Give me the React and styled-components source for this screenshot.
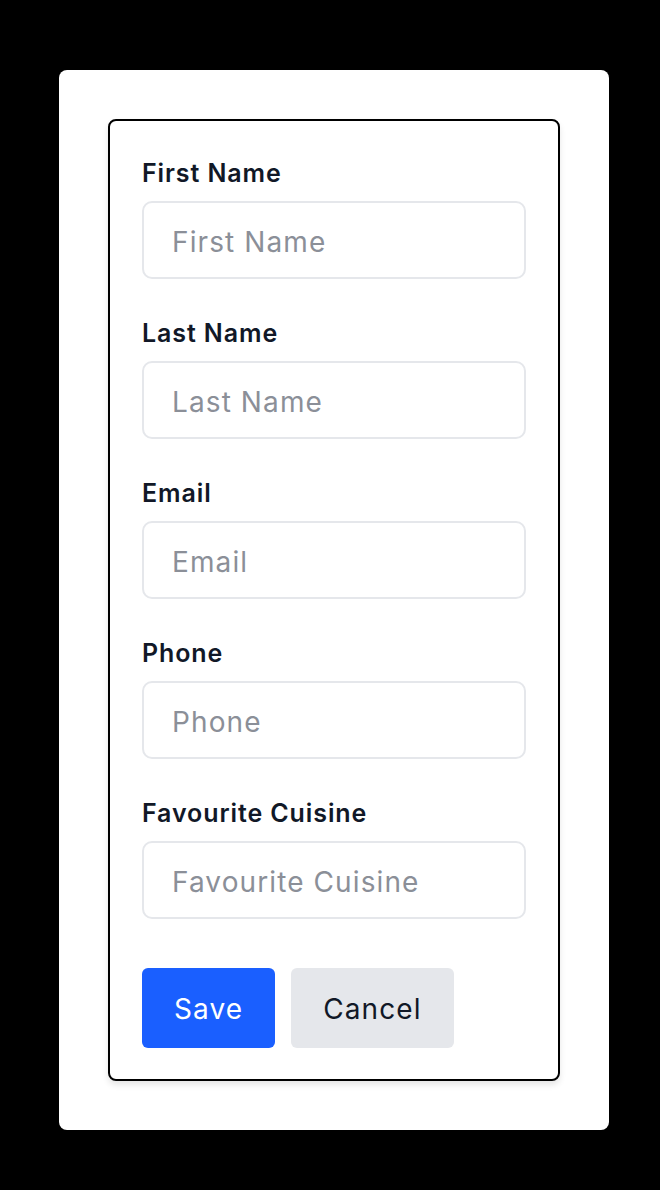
import React from 'react';
import styled, { createGlobalStyle } from 'styled-components';

const GlobalStyle = createGlobalStyle`
  html, body {
    margin: 0;
    padding: 0;
    background: #000000;
  }
  body {
    font-family: Inter, "Noto Sans", "Liberation Sans", sans-serif;
  }
  * {
    box-sizing: border-box;
  }
`;

const Page = styled.div`
  width: 660px;
  height: 1190px;
  padding: 70px 0 0 59px;
  background: #000000;
`;

const Card = styled.div`
  width: 550px;
  height: 1060px;
  padding: 49px;
  background: #ffffff;
  border-radius: 8px;
`;

const Form = styled.form`
  width: 452px;
  height: 962px;
  padding: 36px 32px 30px;
  border: 2px solid #000000;
  border-radius: 8px;
  box-shadow: 0 4px 6px rgba(0, 0, 0, 0.1);
  display: flex;
  flex-direction: column;
`;

const Fields = styled.div`
  display: flex;
  flex-direction: column;
  gap: 38px;
  margin-bottom: 49px;
`;

const Field = styled.div`
  display: flex;
  flex-direction: column;
`;

const Label = styled.label`
  font-size: 25px;
  line-height: 32px;
  font-weight: 600;
  letter-spacing: 0.9px;
  color: #111827;
  margin-bottom: 12px;
`;

const Input = styled.input`
  width: 384px;
  height: 78px;
  padding: 3px 28px 0;
  border: 2px solid #e5e7eb;
  border-radius: 10px;
  font-family: inherit;
  font-size: 28px;
  letter-spacing: 1.1px;
  color: #111827;
  outline: none;

  &::placeholder {
    color: #8b8f98;
  }
`;

const Actions = styled.div`
  display: flex;
  gap: 16px;
`;

const Button = styled.button`
  height: 80px;
  padding: 2px 32px 0;
  border: none;
  border-radius: 6px;
  font-family: inherit;
  font-size: 28px;
  letter-spacing: 1.1px;
  background: ${(p) => (p.$primary ? '#1a5fff' : '#e5e7eb')};
  color: ${(p) => (p.$primary ? '#ffffff' : '#111827')};
  cursor: pointer;
`;

const fields = ['First Name', 'Last Name', 'Email', 'Phone', 'Favourite Cuisine'];

export default function App() {
  return (
    <Page>
      <GlobalStyle />
      <Card>
        <Form onSubmit={(e) => e.preventDefault()}>
          <Fields>
            {fields.map((f) => (
              <Field key={f}>
                <Label>{f}</Label>
                <Input placeholder={f} />
              </Field>
            ))}
          </Fields>
          <Actions>
            <Button type="submit" $primary>
              Save
            </Button>
            <Button type="button">Cancel</Button>
          </Actions>
        </Form>
      </Card>
    </Page>
  );
}
